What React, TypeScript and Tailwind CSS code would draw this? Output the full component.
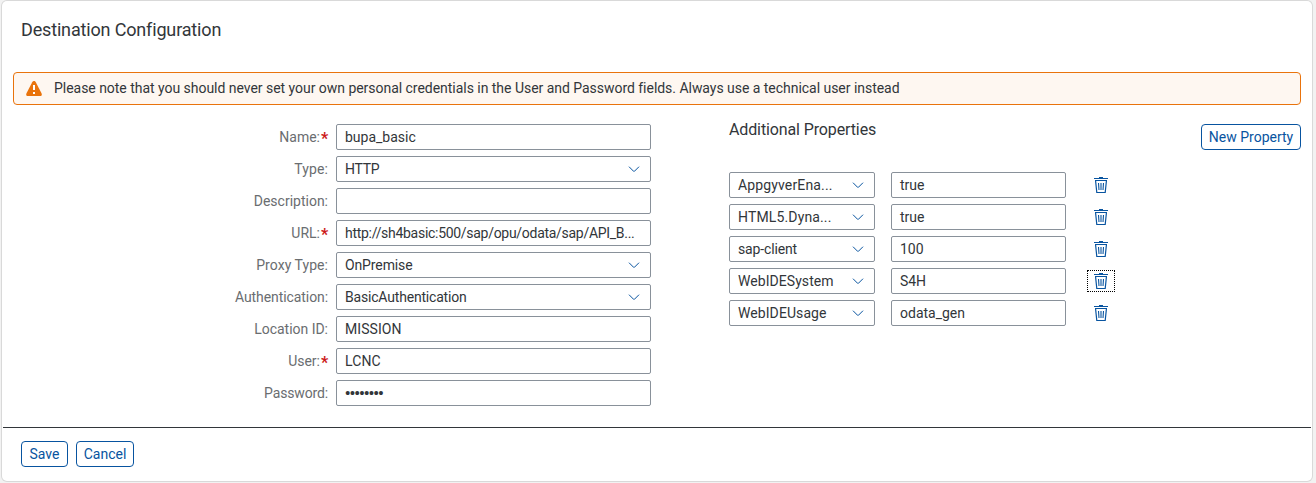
import React from "react";

type Field = { label: string; value: string; required?: boolean; select?: boolean; labelClass?: string; valueClass?: string };

const fields: Field[] = [
  { label: "Name:", value: "bupa_basic", required: true },
  { label: "Type:", value: "HTTP", select: true, labelClass: "tracking-[0.1px]", valueClass: "tracking-[-0.25px]" },
  { label: "Description:", value: "" },
  { label: "URL:", value: "http://sh4basic:500/sap/opu/odata/sap/API_B...", required: true, valueClass: "tracking-[-0.29px]" },
  { label: "Proxy Type:", value: "OnPremise", select: true, labelClass: "tracking-[0.05px]", valueClass: "tracking-[-0.12px]" },
  { label: "Authentication:", value: "BasicAuthentication", select: true, labelClass: "tracking-[-0.08px]", valueClass: "tracking-[-0.19px]" },
  { label: "Location ID:", value: "MISSION", labelClass: "tracking-[-0.02px]", valueClass: "tracking-[0.08px]" },
  { label: "User:", value: "LCNC", required: true, valueClass: "tracking-[0.1px]" },
  { label: "Password:", value: "••••••••", labelClass: "tracking-[-0.15px]", valueClass: "text-[19px] tracking-[-1.65px] -ml-[0.5px] pt-[2px]" },
];

const properties = [
  { name: "AppgyverEna...", value: "true", nameClass: "tracking-[0.14px]" },
  { name: "HTML5.Dyna...", value: "true", nameClass: "tracking-[0.14px]" },
  { name: "sap-client", value: "100", nameClass: "tracking-[-0.15px]" },
  { name: "WebIDESystem", value: "S4H", focused: true, nameClass: "tracking-[0.06px]", valueClass: "tracking-[-0.1px]" },
  { name: "WebIDEUsage", value: "odata_gen", nameClass: "tracking-[0.08px]" },
];

function Chevron() {
  return (
    <svg width="12" height="8" viewBox="0 0 12 8" fill="none" className="shrink-0">
      <path d="M1 1.7 L5.6 6.3 Q6 6.6 6.4 6.3 L11 1.7" stroke="#0854a0" strokeWidth="1" />
    </svg>
  );
}

function Trash() {
  return (
    <svg width="14" height="16" viewBox="0 0 14 16" fill="none" stroke="#0854a0">
      <path d="M5 0.5 H9" />
      <path d="M0 1.5 H14" />
      <path d="M1 3.5 H13" />
      <path d="M1.6 4 L2.8 15.5 H11.2 L12.4 4" strokeWidth="1.2" />
      <path d="M4.5 6 L5 13 M7 6 V13 M9.5 6 L9 13" strokeWidth="1.1" />
    </svg>
  );
}

function Box({ value, select, className, valueClass = "" }: { value: string; select?: boolean; className: string; valueClass?: string }) {
  return (
    <div className={`flex h-[26px] items-center justify-between rounded-[2px] border border-[#89919a] bg-white pl-2 text-[#32363a] ${className}`}>
      <span className={`whitespace-pre ${valueClass}`}>{value}</span>
      {select && <Chevron />}
    </div>
  );
}

function Button({ children, className }: { children: React.ReactNode; className: string }) {
  return (
    <button className={`flex h-[26px] items-center justify-center rounded-[4px] border border-[#0854a0] bg-white whitespace-nowrap text-[#0854a0] ${className}`}>
      {children}
    </button>
  );
}

export default function App() {
  return (
    <div className="h-[483px] w-[1316px] overflow-hidden bg-[#f2f2f2] pt-px pl-[2px] font-['Roboto',sans-serif] text-[14px] leading-4">
      <main className="flex h-[480px] w-[1310px] flex-col rounded-[5px] bg-white shadow-[0_0_0_1px_#d9d9d9]">
        <h1 className="h-[71px] pt-[19px] pl-[19px] text-[18px] leading-5 tracking-[-0.16px] text-[#32363a]">Destination Configuration</h1>
        <div className="ml-[11px] flex h-[33px] w-[1288px] shrink-0 items-center rounded-[4px] border border-[#e9730c] bg-[#fef7f1] pb-px text-[#32363a]">
          <svg width="16" height="15" viewBox="0 0 16 15" className="ml-3 shrink-0">
            <path d="M8 0 C8.8 0 9.4 .5 9.8 1.2 L15.5 12.2 C16.3 13.8 15.5 15 14 15 H2 C.5 15 -.3 13.8 .5 12.2 L6.2 1.2 C6.6 .5 7.2 0 8 0Z" fill="#e9730c" />
            <path d="M7 4 H9 V9 H7Z M7 11 H9 V13 H7Z" fill="#fff" />
          </svg>
          <span className="ml-3 tracking-[-0.032px] whitespace-nowrap">Please note that you should never set your own personal credentials in the User and Password fields. Always use a technical user instead</span>
        </div>
        <div className="flex h-[322px] shrink-0 pt-[19px]">
          <div className="flex w-[649px] flex-col gap-[6px]">
            {fields.map((f) => (
              <div key={f.label} className="flex h-[26px] items-center">
                <label className="mr-2 flex w-[326px] items-center justify-end text-[#6a6d70]">
                  <span className={f.labelClass}>{f.label}</span>
                  {f.required && <span className="ml-px h-4 w-[7px] text-[16px] leading-[19px] font-bold text-[#cc1919]">*</span>}
                </label>
                <Box value={f.value} select={f.select} valueClass={f.valueClass} className={f.select ? "w-[315px] pr-[10.5px]" : "w-[315px]"} />
              </div>
            ))}
          </div>
          <div className="ml-[78px] w-[572px]">
            <div className="flex h-12 items-start justify-between">
              <h2 className="-mt-[3px] text-[16px] leading-[18px] tracking-[-0.12px] text-[#32363a]">Additional Properties</h2>
              <Button className="w-[100px]">New Property</Button>
            </div>
            <div className="flex flex-col gap-[6px]">
              {properties.map((p) => (
                <div key={p.name} className="flex h-[26px] items-center">
                  <Box value={p.name} select valueClass={p.nameClass} className="w-[146px] pr-[10px]" />
                  <Box value={p.value} valueClass={p.valueClass} className="ml-4 w-[175px]" />
                  <button className={p.focused ? "ml-[21px] flex h-[22px] w-7 items-center justify-center border border-dotted border-black" : "ml-[21px] flex h-[22px] w-7 items-center justify-center"}>
                    <Trash />
                  </button>
                </div>
              ))}
            </div>
          </div>
        </div>
        <footer className="mx-px flex h-[53px] border-t border-[#32363a] pt-[13px] pl-[18px]">
          <Button className="w-[47px]">Save</Button>
          <Button className="ml-2 w-[58px]">Cancel</Button>
        </footer>
      </main>
    </div>
  );
}
